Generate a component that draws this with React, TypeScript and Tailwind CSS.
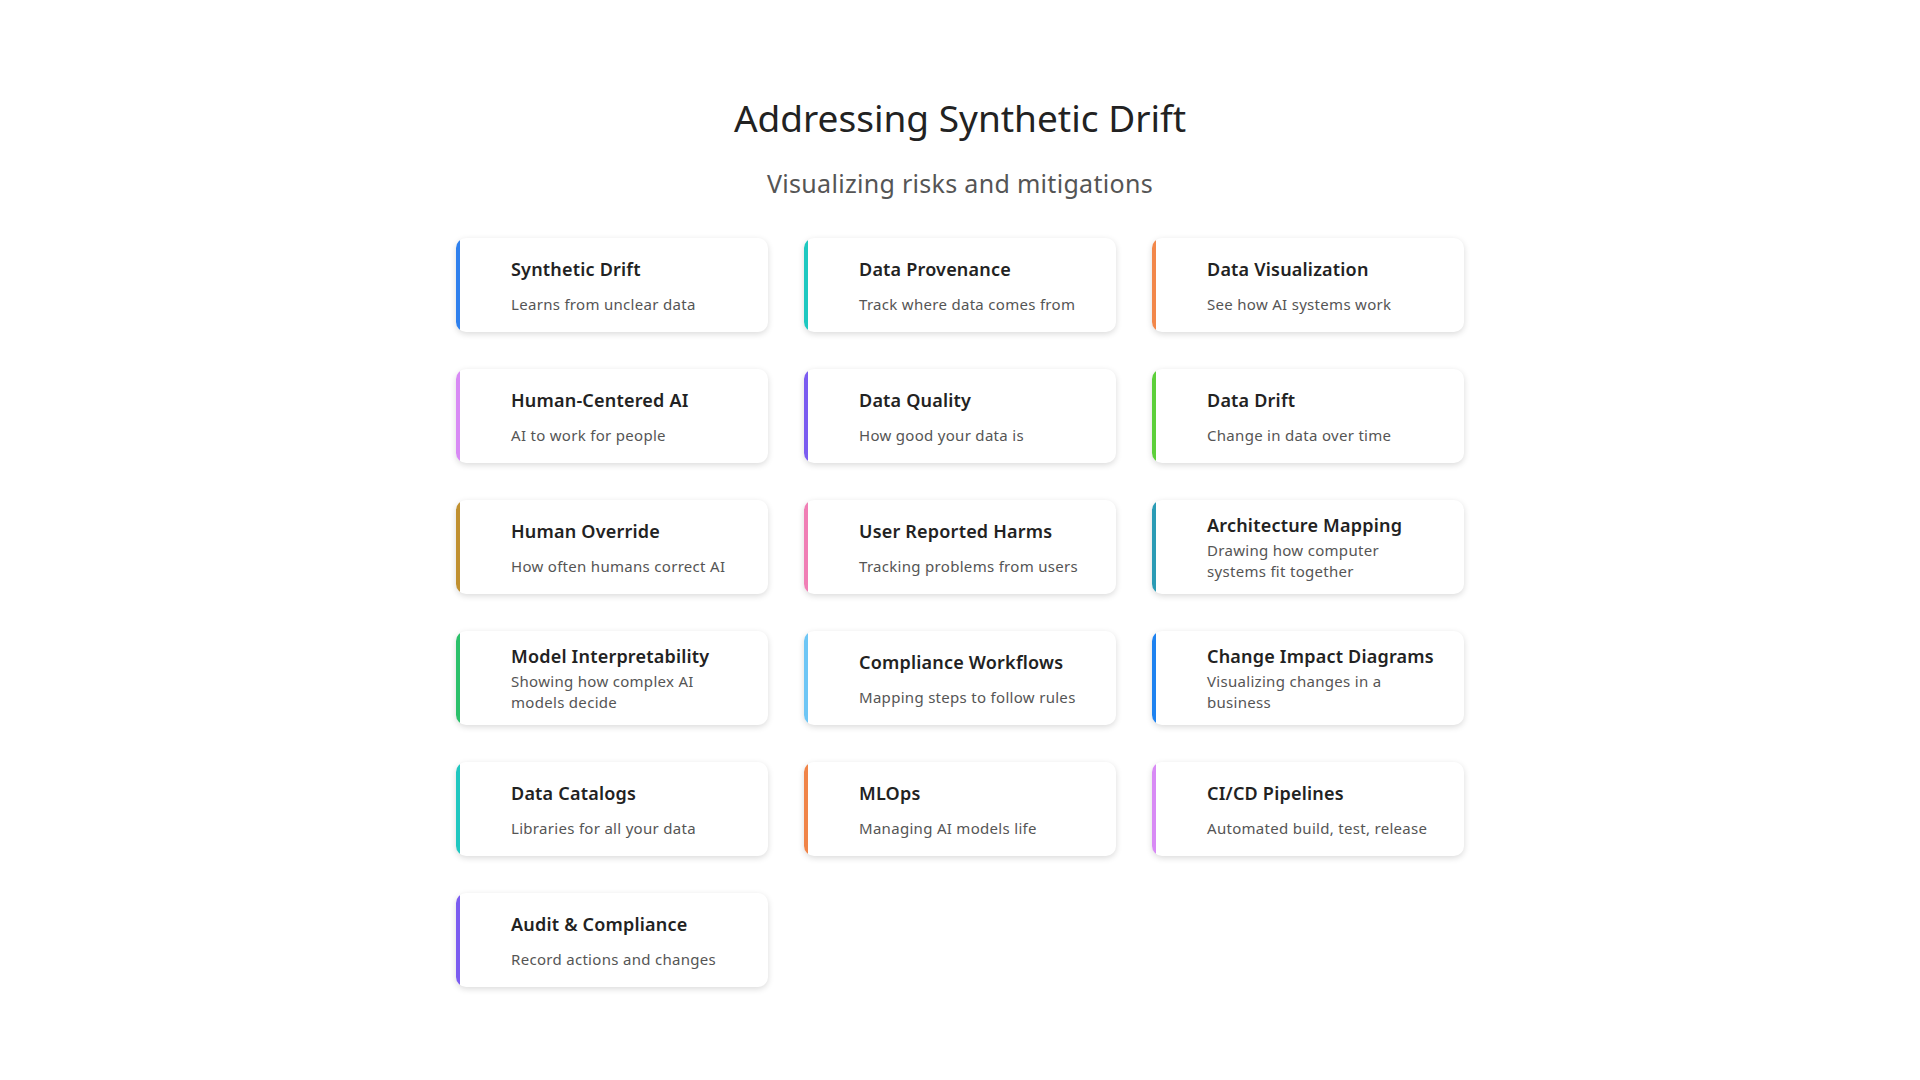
const items: [string, string, string][] = [
  ["Synthetic Drift", "Learns from unclear data", "#2f80ed"],
  ["Data Provenance", "Track where data comes from", "#1ec8c0"],
  ["Data Visualization", "See how AI systems work", "#f2874a"],
  ["Human-Centered AI", "AI to work for people", "#d88af5"],
  ["Data Quality", "How good your data is", "#7b5cf0"],
  ["Data Drift", "Change in data over time", "#5ccf3a"],
  ["Human Override", "How often humans correct AI", "#c09030"],
  ["User Reported Harms", "Tracking problems from users", "#f07fb5"],
  ["Architecture Mapping", "Drawing how computer systems fit together", "#2a9bb5"],
  ["Model Interpretability", "Showing how complex AI models decide", "#2bc06a"],
  ["Compliance Workflows", "Mapping steps to follow rules", "#6ec6f5"],
  ["Change Impact Diagrams", "Visualizing changes in a business", "#1e82f0"],
  ["Data Catalogs", "Libraries for all your data", "#20c7c0"],
  ["MLOps", "Managing AI models life", "#f08448"],
  ["CI/CD Pipelines", "Automated build, test, release", "#d88af5"],
  ["Audit & Compliance", "Record actions and changes", "#7b5cf0"],
];

export default function App() {
  return (
    <div className="w-[1920px] h-[1080px] bg-white flex flex-col items-center" style={{ fontFamily: '"Noto Sans", "Open Sans", sans-serif' }}>
      <h1 className="mt-[92px] text-[37px] leading-[52px] text-[#222] font-normal">Addressing Synthetic Drift</h1>
      <p className="mt-[22px] text-[25px] leading-[34px] text-[#555] tracking-[0.3px]">Visualizing risks and mitigations</p>
      <div className="mt-[38px] grid grid-cols-[312px_312px_312px] gap-x-[36px] gap-y-[37px]">
        {items.map(([t, d, c]) => {
          const wrap = d.length > 30 || t === "Change Impact Diagrams";
          return (
            <div key={t} className="h-[94px] bg-white rounded-[10px] shadow-[0_2px_6px_rgba(0,0,0,0.15)] flex overflow-hidden">
              <div className="w-[4px] rounded-l-[10px]" style={{ backgroundColor: c }} />
              <div className="pl-[51px] flex flex-col justify-center">
                <div className="text-[18px] leading-[26px] font-semibold text-[#222] tracking-[0.2px]">{t}</div>
                <div className={`text-[15px] leading-[21px] text-[#555] tracking-[0.3px] ${t === "Change Impact Diagrams" ? "w-[180px]" : "w-[235px]"} ${wrap ? "mt-[2px]" : "mt-[12px]"}`}>{d}</div>
              </div>
            </div>
          );
        })}
      </div>
    </div>
  );
}
